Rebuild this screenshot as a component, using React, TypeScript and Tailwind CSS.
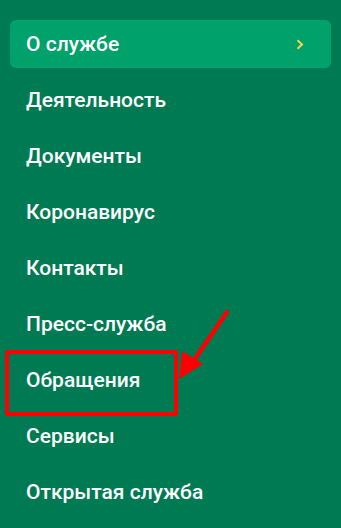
import React from "react";

const items = [
  "Деятельность",
  "Документы",
  "Коронавирус",
  "Контакты",
  "Пресс-служба",
  "Обращения",
  "Сервисы",
  "Открытая служба",
];

export default function App() {
  return (
    <div
      className="relative w-[341px] h-[528px] bg-[#007a52] overflow-hidden"
      style={{ fontFamily: "Roboto, 'Noto Sans', sans-serif" }}
    >
      <div className="flex flex-col gap-2 px-[10px] pt-[20px] w-[341px]">
        <div className="flex items-center justify-between h-[48px] rounded-[6px] bg-[#00a16b] pl-[16px] pr-[27px]">
          <span className="text-[21px] font-medium text-white leading-none">О службе</span>
          <svg width="8" height="11" viewBox="0 0 8 11" fill="none">
            <path d="M1.5 1.2 L6 5.5 L1.5 9.8" stroke="#f2d64b" strokeWidth="2" />
          </svg>
        </div>
        {items.map((t) => (
          <div key={t} className="flex items-center h-[48px] pl-[16px]">
            <span className="text-[21px] font-medium text-white leading-none">{t}</span>
          </div>
        ))}
      </div>
      <div className="absolute left-[5px] top-[350px] w-[173px] h-[66px] border-[4px] border-[#ff0000] rounded-[3px]" />
      <svg className="absolute left-0 top-0" width="341" height="528" viewBox="0 0 341 528">
        <line x1="227" y1="312" x2="190" y2="366" stroke="#ff0000" strokeWidth="4.5" strokeLinecap="round" />
        <polygon points="179,379 182,351 203,364" fill="#ff0000" />
      </svg>
    </div>
  );
}
